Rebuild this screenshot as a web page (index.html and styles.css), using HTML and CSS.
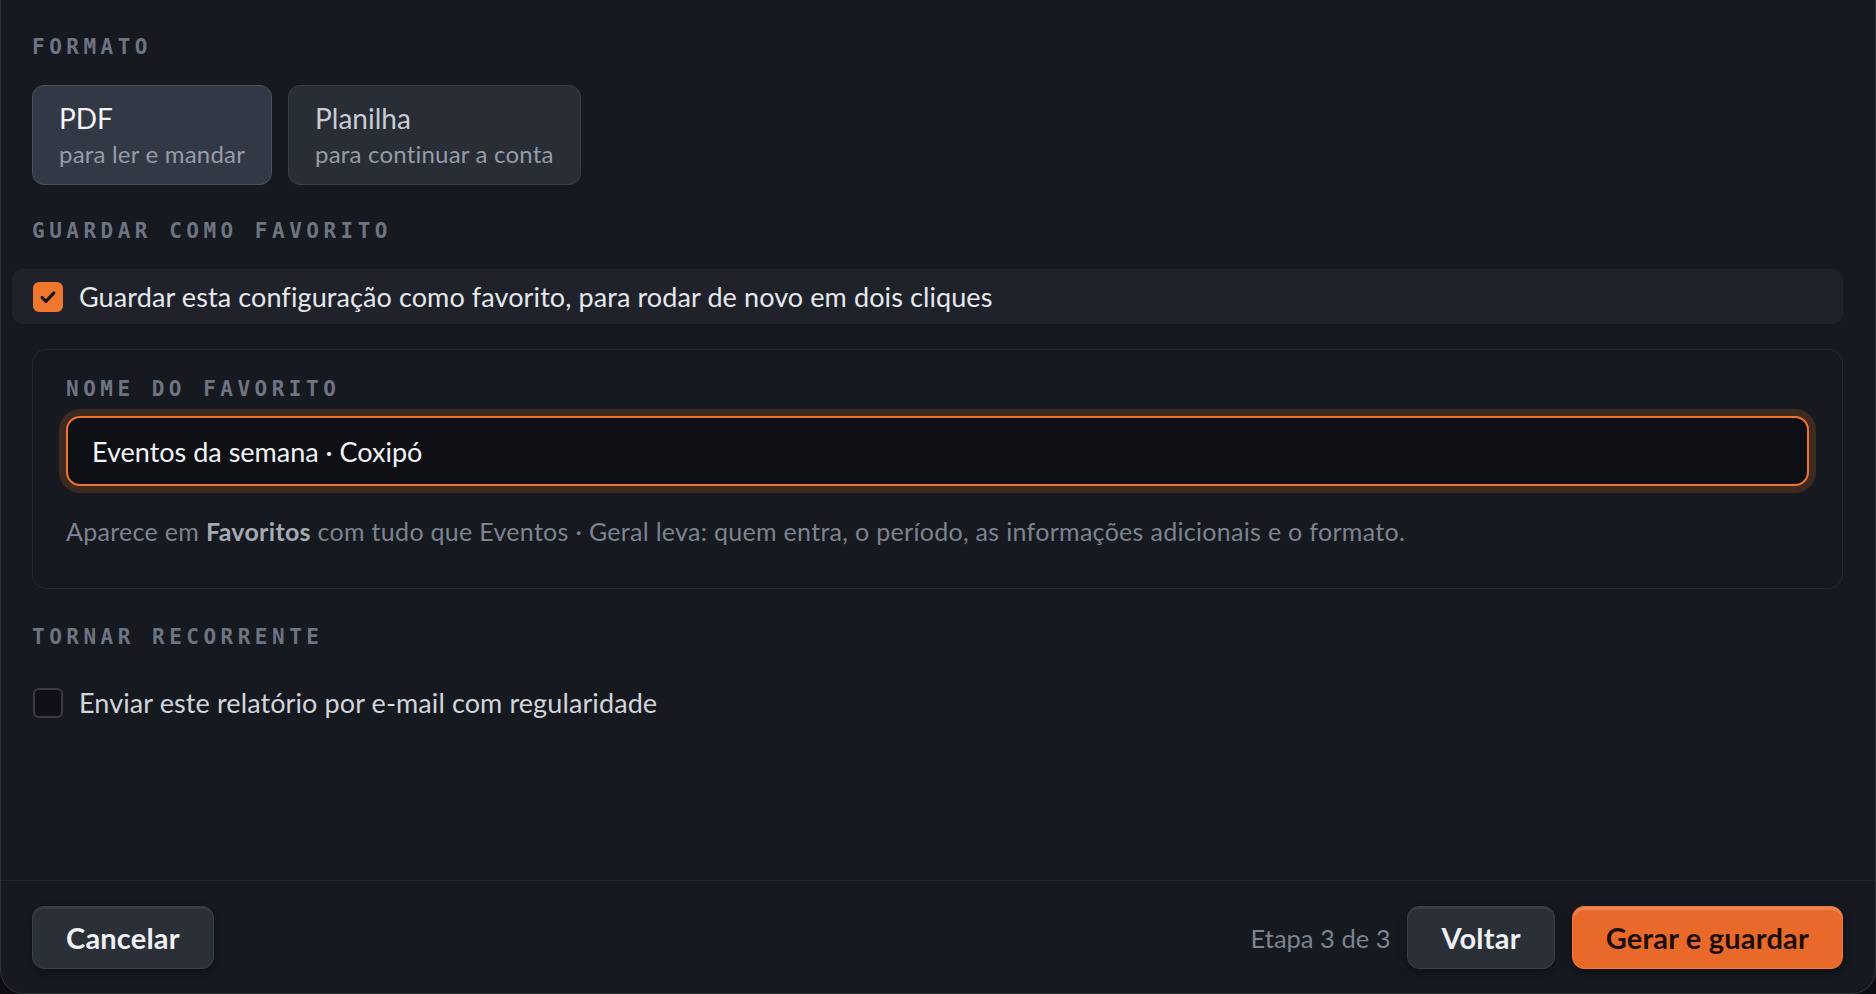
FILE: index.html
```html
<!DOCTYPE html>
<html lang="pt-BR">
<head>
<meta charset="utf-8">
<title>Gerar relatório</title>
<link rel="stylesheet" href="styles.css">
</head>
<body>
<div class="panel">
  <main class="content">
    <section class="section">
      <h3 class="label">FORMATO</h3>
      <div class="formats">
        <div class="format active">
          <span class="format-title">PDF</span>
          <span class="format-sub">para ler e mandar</span>
        </div>
        <div class="format">
          <span class="format-title">Planilha</span>
          <span class="format-sub">para continuar a conta</span>
        </div>
      </div>
    </section>

    <section class="section section-fav">
      <h3 class="label">GUARDAR COMO FAVORITO</h3>
      <div class="check-row filled">
        <span class="box checked">
          <svg viewBox="0 0 24 24" width="22" height="22"><path d="M5.5 12.5l4.2 4.2L18.5 7.5" fill="none" stroke="#1a1410" stroke-width="3.4" stroke-linecap="round" stroke-linejoin="round"/></svg>
        </span>
        <span class="check-text">Guardar esta configuração como favorito, para rodar de novo em dois cliques</span>
      </div>
      <div class="fav-box">
        <h4 class="label">NOME DO FAVORITO</h4>
        <div class="input">Eventos da semana · Coxipó</div>
        <p class="hint">Aparece em <strong>Favoritos</strong> com tudo que Eventos · Geral leva: quem entra, o período, as informações adicionais e o formato.</p>
      </div>
    </section>

    <section class="section section-rec">
      <h3 class="label">TORNAR RECORRENTE</h3>
      <div class="check-row">
        <span class="box"></span>
        <span class="check-text">Enviar este relatório por e-mail com regularidade</span>
      </div>
    </section>
  </main>

  <footer class="footer">
    <button class="btn">Cancelar</button>
    <div class="footer-right">
      <span class="step">Etapa 3 de 3</span>
      <button class="btn">Voltar</button>
      <button class="btn btn-primary">Gerar e guardar</button>
    </div>
  </footer>
</div>
</body>
</html>
```

FILE: styles.css
```css
* { box-sizing: border-box; }

html, body {
  margin: 0;
  padding: 0;
  background: #0c0e12;
}

body {
  font-family: "Lato", "Noto Sans", sans-serif;
  color: #e6e8ec;
}

.panel {
  height: 994px;
  display: flex;
  flex-direction: column;
  background: #161920;
  border: 1px solid #2c313b;
  border-top: none;
  border-radius: 0 0 24px 24px;
}

.content {
  flex: 1;
  padding: 35px 32px 0 31px;
}

.label {
  margin: 0;
  font-family: "DejaVu Sans Mono", "Liberation Mono", monospace;
  font-weight: bold;
  font-size: 21px;
  line-height: 24px;
  letter-spacing: 4.5px;
  color: #6d7482;
}

.section > .label { margin-bottom: 26px; }

.section-fav { margin-top: 34px; }
.section-rec { margin-top: 36px; }

.formats {
  display: flex;
  gap: 16px;
}

.format {
  display: flex;
  flex-direction: column;
  gap: 6px;
  padding: 16px 26px 16px;
  border: 1px solid #383e49;
  border-radius: 12px;
  background: #282d36;
}

.format.active {
  background: #323844;
  border-color: #4a515d;
}

.format-title {
  font-size: 28px;
  line-height: 32px;
  color: #c9ccd3;
}

.format.active .format-title { color: #f2f3f5; }

.format-sub {
  font-size: 24px;
  line-height: 28px;
  letter-spacing: 0.2px;
  color: #979ca6;
}

.check-row {
  display: flex;
  align-items: center;
  gap: 16px;
  height: 55px;
  margin-left: -20px;
  padding-left: 21px;
  border-radius: 10px;
}

.check-row.filled { background: #1f222a; }

.box {
  flex: none;
  width: 30px;
  height: 30px;
  border-radius: 6px;
  border: 2px solid #363b46;
  background: #0f1116;
  display: flex;
  align-items: center;
  justify-content: center;
}

.box.checked {
  background: #f0772f;
  border-color: #f0772f;
}

.check-text {
  font-size: 27px;
  line-height: 30px;
  letter-spacing: 0.1px;
  color: #e6e8ec;
}

.check-row:not(.filled) .check-text { color: #d2d5db; }

.fav-box {
  margin-top: 25px;
  border: 1px solid #252932;
  border-radius: 14px;
  padding: 27px 33px 42px;
}

.input {
  margin-top: 15px;
  height: 70px;
  display: flex;
  align-items: center;
  padding: 0 24px;
  border: 2px solid #ec7430;
  border-radius: 14px;
  background: #0e1015;
  box-shadow: 0 0 0 7px #3f2a20;
  font-size: 27px;
  color: #f2f3f5;
}

.hint {
  margin: 30px 0 0;
  font-size: 25px;
  line-height: 30px;
  letter-spacing: 0.3px;
  color: #7d838f;
}

.hint strong {
  color: #a5aab3;
  font-weight: 700;
}

.footer {
  display: flex;
  align-items: center;
  justify-content: space-between;
  border-top: 1px solid #232731;
  padding: 25px 32px 24px 31px;
}

.footer-right {
  display: flex;
  align-items: center;
  gap: 17px;
}

.step {
  font-size: 25.5px;
  color: #7d838f;
}

.btn {
  height: 63px;
  padding: 0 33px;
  border: 1px solid #3a404b;
  border-radius: 12px;
  background: #2a2f38;
  color: #eef0f3;
  font-family: "Lato", "Noto Sans", sans-serif;
  font-weight: 700;
  font-size: 29px;
  letter-spacing: 0.2px;
  box-shadow: inset 0 2px 0 rgba(255, 255, 255, 0.06), 0 4px 10px rgba(0, 0, 0, 0.35);
}

.btn-primary {
  background: #e8692a;
  border-color: #ee7a3c;
  color: #1c0e06;
  padding: 0 33px;
  box-shadow: inset 0 3px 0 rgba(255, 255, 255, 0.18), 0 4px 10px rgba(0, 0, 0, 0.35);
}
```
